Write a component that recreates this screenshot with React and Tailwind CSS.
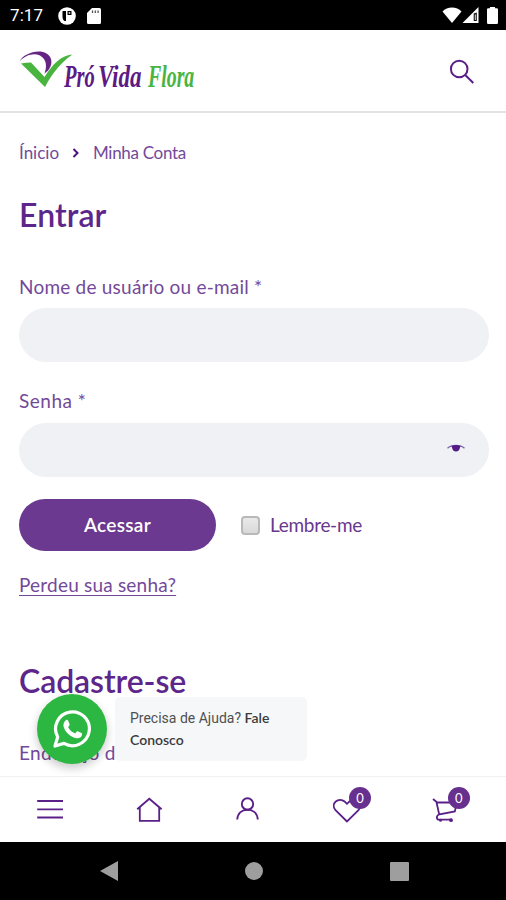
import React from 'react';

const navItems = [
  { id: 'menu', icon: MenuIcon },
  { id: 'home', icon: HomeIcon },
  { id: 'account', icon: UserIcon },
  { id: 'wishlist', icon: HeartIcon, count: 0 },
  { id: 'cart', icon: CartIcon, count: 0 }
];

function Logo() {
  return (
    <div className="flex">
      <svg width="48" height="44" viewBox="0 0 48 44" className="block overflow-visible">
        <path d="M4.5 17.5C8 10 23 4.5 31.5 9.5C39.5 14.5 37 25 29.5 29.5C32 23 32 15.5 25 11.5C18 8.5 10 11.5 4.5 17.5Z" fill="#652483" />
        <path d="M6 19.5Q11 18.5 16 18.5L29.5 33C38 20 45 12 57.5 10.5C47 17.5 38 28 30 43Z" fill="#4ab441" />
      </svg>
      <svg width="134" height="50" viewBox="0 0 134 50" className="block">
        <g fontFamily="Liberation Serif, serif" fontWeight="700" fontStyle="italic" fontSize="32">
          <text transform="translate(1 42.5) scale(0.64 1)" fill="#5d1a85">Pró</text>
          <text transform="translate(35 42.5) scale(0.72 1)" fill="#5d1a85">Vida</text>
          <text transform="translate(85 42.5) scale(0.62 1)" fill="#4ab441">Flora</text>
        </g>
      </svg>
    </div>
  );
}

function MenuIcon() {
  return (
    <svg width="32" height="32" viewBox="0 0 32 32" fill="none" stroke="#5a2088" strokeWidth="1.8">
      <path d="M3.2 8H29M3.2 16.3H29M3.2 24.5H29" />
    </svg>
  );
}

function HomeIcon() {
  return (
    <svg width="32" height="32" viewBox="0 0 32 32" fill="none" stroke="#5a2088" strokeWidth="1.8">
      <path d="M4.2 16.3L16.3 5.8L28.6 16.3M6.8 14.5V27.8H26.2V14.5" />
    </svg>
  );
}

function UserIcon() {
  return (
    <svg width="32" height="32" viewBox="0 0 32 32" fill="none" stroke="#5a2088" strokeWidth="1.9">
      <circle cx="16.5" cy="11" r="5.7" />
      <path d="M6.2 26.5C6.7 20 11 16.7 16.5 16.7S26.3 20 26.8 26.5" />
    </svg>
  );
}

function HeartIcon() {
  return (
    <svg width="32" height="32" viewBox="0 0 32 32" fill="none" stroke="#5a2088" strokeWidth="1.8">
      <path d="M17 28.5L5.5 17.2C0 10.5 8.5 3.5 15 8.8L17 10.8L19 8.8C25.5 3.5 34 10.5 28.5 17.2Z" />
    </svg>
  );
}

function CartIcon() {
  return (
    <svg width="32" height="32" viewBox="0 0 32 32" fill="none" stroke="#5a2088" strokeWidth="1.8">
      <path d="M4 6L7.4 8.8L10.2 21.5L25.8 18.5L28 9.5H7.6M10.2 21.5C7 22.5 7.2 26.6 10 26.6H23" />
      <circle cx="11.5" cy="27.2" r="1.5" fill="#5a2088" stroke="none" />
      <circle cx="22" cy="27.2" r="1.9" fill="#5a2088" stroke="none" />
    </svg>
  );
}

function StatusBar() {
  return (
    <div className="flex h-[30px] shrink-0 items-center bg-black pl-[10px] pr-[8px] text-white">
      <span className="w-[48px] font-[Roboto] text-[17px] leading-[30px] tracking-[0.1px]">7:17</span>
      <svg width="18" height="18" viewBox="0 0 18 18" className="mt-px">
        <circle cx="9" cy="9" r="8.8" fill="#fff" />
        <path d="M4.5 4H8V14H6.5C5.2 13 4.5 11.5 4.5 9.5Z" fill="#000" />
        <path d="M9.5 4H13.5V8H9.5Z" fill="#000" />
        <path d="M10.7 5.2H12.2V6.7H10.7Z" fill="#fff" />
      </svg>
      <svg width="14" height="16" viewBox="0 0 14 16" className="ml-[11px] mt-px">
        <path d="M5 0H12.5Q14 0 14 1.5V14.5Q14 16 12.5 16H1.5Q0 16 0 14.5V5Z" fill="#fff" />
        <path d="M5.5 2.5V5M8.3 2.5V5M11.1 2.5V5" stroke="#555" strokeWidth="1.3" />
      </svg>
      <div className="ml-auto flex items-center">
        <svg width="20" height="16" viewBox="0 0 20 16">
          <path d="M0.5 4.5C5 -1 15 -1 19.5 4.5L10 16Z" fill="#fff" />
        </svg>
        <svg width="17" height="16" viewBox="0 0 17 16">
          <path d="M16.5 0V16H0.5Z" fill="#fff" />
          <path d="M11.7 6.5V14H14.8V5.5Z" fill="#111" />
          <path d="M12.8 7.5H13.8V13H12.8Z" fill="#ddd" />
        </svg>
        <svg width="11" height="17" viewBox="0 0 11 17" className="ml-[8px]">
          <path d="M3 0H8V1.2H9.7Q11 1.2 11 2.5V15.7Q11 17 9.7 17H1.3Q0 17 0 15.7V2.5Q0 1.2 1.3 1.2H3Z" fill="#fff" />
        </svg>
      </div>
    </div>
  );
}

function Header() {
  return (
    <header className="flex h-[83px] shrink-0 items-start justify-between border-b-2 border-[#e3e3e4] pl-[15px] pr-[30px]">
      <div className="pt-[14px]">
        <Logo />
      </div>
      <svg width="28" height="28" viewBox="0 0 28 28" fill="none" stroke="#5a2088" strokeWidth="2" className="mt-[28px]">
        <circle cx="11.2" cy="11" r="8.3" />
        <path d="M17.2 17L25.3 25" />
      </svg>
    </header>
  );
}

function Breadcrumb() {
  return (
    <div className="flex h-6 items-center text-[17px] leading-6">
      <span className="w-[53px]">Ínicio</span>
      <svg width="8" height="10" viewBox="0 0 8 10" fill="none" stroke="#4d1380" strokeWidth="2">
        <path d="M1.5 1L5.5 5L1.5 9" />
      </svg>
      <span className="ml-[13px] tracking-[-0.3px]">Minha Conta</span>
    </div>
  );
}

function WhatsAppHelp() {
  return (
    <div className="absolute left-[37px] top-[694px] flex items-start">
      <div className="flex h-[70px] w-[70px] items-center justify-center rounded-full bg-[#2cb742] shadow-[0_4px_10px_rgba(0,0,0,0.22)]">
        <svg width="38" height="38" viewBox="0 0 38 38" fill="none">
          <path d="M2 36L4.7 27A16.9 16.9 0 1 1 11 33.4Z" stroke="#fff" strokeWidth="3.2" strokeLinejoin="round" />
          <path
            d="M12.8 10.2C13.6 9.5 14.7 9.7 15.1 10.6L16.5 13.9C16.8 14.6 16.6 15.2 15.1 16.9C16.7 20 18.9 22.1 22.2 23.4C24 21.3 24.3 21.1 25.2 21.5L28.4 23.1C29.2 23.5 29.2 24 28.9 25.2C28.4 27.2 26 28.5 23.8 28.2C17.4 27.3 11.8 21.6 10.6 16.7C10 14.2 11 11.6 12.8 10.2Z"
            fill="#fff"
          />
        </svg>
      </div>
      <div className="ml-[8px] mt-[3px] h-[64px] w-[192px] rounded-[5px] bg-[#f5f7f9] pl-[15px] pt-[9px] font-[Roboto] text-[14px] leading-[23px] text-[#505050]">
        <p className="h-[22px] whitespace-nowrap">
          Precisa de Ajuda? <span className="font-[Lato] font-semibold text-[#3b3b3b]">Fale</span>
        </p>
        <p className="font-[Lato] font-semibold text-[#3b3b3b]">Conosco</p>
      </div>
    </div>
  );
}

function BottomNav() {
  return (
    <nav className="flex h-[66px] shrink-0 border-t border-[#f1f1f1] bg-white pl-[1px] pr-[12px] pt-[16px]">
      {navItems.map(({ id, icon: Icon, count }) => (
        <div key={id} className="flex flex-1 justify-center">
          <div className="relative h-8 w-8">
            <Icon />
            {count !== undefined && (
              <span className="absolute left-[19px] top-[-6px] h-[22px] w-[22px] rounded-full bg-[#67308f] text-center font-[Lato] text-[13px] leading-[22px] text-white">
                {count}
              </span>
            )}
          </div>
        </div>
      ))}
    </nav>
  );
}

function SystemNav() {
  return (
    <div className="flex h-[58px] shrink-0 items-center justify-center gap-[127px] bg-black pl-[2px]">
      <svg width="18" height="20" viewBox="0 0 18 20" fill="#9e9e9e"><path d="M0 10L18 0V20Z" /></svg>
      <div className="h-[18px] w-[18px] rounded-full bg-[#9e9e9e]" />
      <div className="h-[19px] w-[19px] rounded-[1px] bg-[#9e9e9e]" />
    </div>
  );
}

export default function App() {
  return (
    <div className="relative flex h-[900px] w-[506px] flex-col overflow-hidden bg-white font-[Lato,sans-serif] text-[#73499a]">
      <StatusBar />
      <Header />

      <main className="h-0 grow overflow-hidden pl-[19px] pr-[17px] pt-[28px]">
        <Breadcrumb />

        <h2 className="mt-[30px] h-10 text-[32px] font-semibold leading-10 tracking-[0.1px] text-[#5d268b]">Entrar</h2>

        <label className="mt-[40px] block h-6 text-[19px] leading-6 tracking-[0.22px]">Nome de usuário ou e-mail *</label>
        <div className="mt-[9px] h-[54px] rounded-full bg-[#eff1f5]" />

        <label className="mt-[27px] block h-6 text-[19px] leading-6 tracking-[0.5px]">Senha *</label>
        <div className="mt-[10px] flex h-[54px] items-start justify-end rounded-full bg-[#eff1f5] pr-[24px] pt-[21px]">
          <svg width="18" height="9" viewBox="0 0 18 9" fill="none">
            <path d="M0.5 4.2C4.5 0.4 13.5 0.4 17.5 4.2" stroke="#7b65b0" strokeWidth="1.3" />
            <path d="M4.5 2Q9 0.2 13.5 2L12.7 4.5A3.8 3.8 0 0 1 5.3 4.5Z" fill="#561c86" />
          </svg>
        </div>

        <div className="mt-[22px] flex items-center">
          <button className="h-[52px] w-[197px] rounded-full bg-[#6b3990] text-[19px] font-semibold tracking-[0.3px] text-white">Acessar</button>
          <span className="ml-[25px] h-[19px] w-[19px] rounded-[4px] border-2 border-[#b9b9b9] bg-linear-to-b from-[#e9e9e9] to-[#d9d9d9]" />
          <span className="ml-[10px] text-[19px] tracking-[-0.3px] text-[#67388f]">Lembre-me</span>
        </div>

        <a className="mt-[22px] block h-6 text-[19px] leading-6 tracking-[0.2px] underline underline-offset-[3px]">Perdeu sua senha?</a>

        <h2 className="mt-[64px] h-10 text-[32px] font-semibold leading-10 tracking-[-0.1px] text-[#5d268b]">Cadastre-se</h2>
        <div className="mt-[40px] h-6 text-[19px] leading-6 tracking-[0.3px]">Endereço d</div>
      </main>

      <WhatsAppHelp />
      <BottomNav />
      <SystemNav />
    </div>
  );
}
